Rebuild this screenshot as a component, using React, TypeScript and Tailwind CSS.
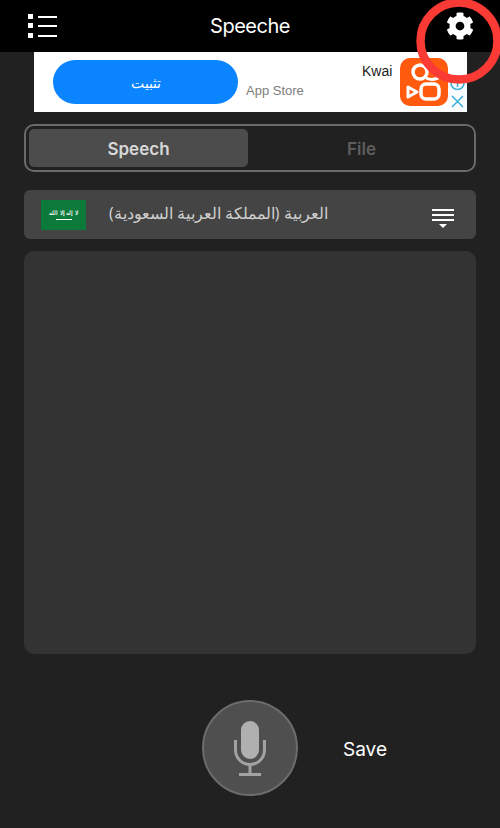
import { FaCog } from "react-icons/fa";

export default function App() {
  return (
    <div className="relative w-[500px] h-[828px] overflow-hidden bg-[#212121] font-['Liberation_Sans','Noto_Sans',sans-serif]">
      <header className="relative h-[52px] bg-black flex items-center justify-between pl-[28px] pr-[26px]">
        <svg width="30" height="25" viewBox="0 0 30 25" fill="#fff">
          <rect x="0" y="0" width="5" height="5" />
          <rect x="0" y="9" width="5" height="5" />
          <rect x="0" y="19" width="5" height="5" />
          <rect x="10" y="2" width="19" height="2" />
          <rect x="10" y="11" width="19" height="2" />
          <rect x="10" y="21" width="19" height="2" />
        </svg>
        <h1 className="absolute left-0 right-0 top-[13px] text-center text-[20px] leading-[26px] text-white font-['Inter',sans-serif] tracking-[-0.5px]">Speeche</h1>
        <FaCog size={28} color="#fff" />
      </header>

      <div className="relative mx-[34px] w-[433px] h-[60px] bg-white flex items-center">
        <div className="ml-[19px] w-[185px] h-[44px] rounded-full bg-[#0a84ff] flex items-center justify-center text-white text-[14px] font-['Noto_Sans',sans-serif]" dir="rtl">تثبيت</div>
        <span className="absolute left-[212px] top-[31px] text-[13px] leading-[16px] text-[#7d7d7d]">App Store</span>
        <span className="absolute left-[328px] top-[11px] text-[14px] leading-[16px] text-[#222]">Kwai</span>
        <div className="absolute left-[366px] top-[6px] w-[48px] h-[48px] rounded-[10px] bg-[#ff5a0d]">
          <svg width="48" height="48" viewBox="0 0 48 48" fill="none" stroke="#fff" strokeWidth="3.500">
            <circle cx="20" cy="14" r="7" />
            <path d="M25 19c3 3 8 3 13 1" strokeWidth="3" strokeLinecap="round" />
            <rect x="21" y="26" width="18" height="15" rx="5" />
            <path d="M8 29l9 5-9 5z" strokeWidth="3" strokeLinejoin="round" />
          </svg>
        </div>
        <div className="absolute right-0 top-[27px] w-[19px] h-[33px] bg-[#fafdff] flex flex-col items-center">
          <svg width="15" height="15" viewBox="0 0 15 15" fill="none" stroke="#3ab0d8" strokeWidth="1.500">
            <circle cx="7.500" cy="4" r="6.500" />
            <path d="M7.500 2v6" />
          </svg>
          <svg width="13" height="13" viewBox="0 0 13 13" fill="none" stroke="#3ab0d8" strokeWidth="1.500" className="mt-[1px]">
            <path d="M1 1l11 11M12 1L1 12" />
          </svg>
        </div>
      </div>

      <div className="mx-[24px] mt-[12px] w-[452px] h-[48px] rounded-[10px] border-2 border-[#6a6a6a] p-[3px] flex">
        <div className="w-[219px] pt-[4px] rounded-[5px] bg-[#4c4c4c] flex items-center justify-center text-[17px] font-semibold text-[#d8d8d8] font-['Inter',sans-serif]">Speech</div>
        <div className="flex-1 pt-[4px] pl-[4px] flex items-center justify-center text-[17px] font-semibold text-[#5e5e5e] font-['Inter',sans-serif]">File</div>
      </div>

      <div className="mx-[24px] mt-[18px] w-[452px] h-[49px] rounded-[6px] bg-[#444444] flex items-center pl-[17px] pr-[22px]">
        <div className="w-[45px] h-[30px] bg-[#0b7a3b] flex flex-col items-center justify-center gap-[2px]">
          <span className="text-[5.500px] leading-[8px] font-bold text-[#e4f0e8] font-['Noto_Sans',sans-serif] whitespace-nowrap" dir="rtl">لا إله إلا الله</span>
          <div className="w-[16px] h-px bg-white" />
        </div>
        <div className="ml-[23px] flex-1 text-[15.600px] leading-[24px] text-[#cfcfcf] font-['Noto_Sans',sans-serif] mb-[3px]">
          <span dir="rtl">العربية (المملكة العربية السعودية)</span>
        </div>
        <svg width="22" height="20" viewBox="0 0 22 20" fill="#fff" className="mt-[9px]">
          <rect x="0" y="0" width="22" height="2" />
          <rect x="0" y="5" width="22" height="2" />
          <rect x="0" y="10" width="22" height="2" />
          <path d="M7 15h8l-4 4z" />
        </svg>
      </div>

      <div className="mx-[24px] mt-[12px] w-[452px] h-[403px] rounded-[10px] bg-[#333333]" />

      <div className="relative mt-[46px] flex items-center">
        <div className="ml-[202px] w-[96px] h-[96px] rounded-full bg-[#4f4f4f] border-2 border-[#6c6c6c] flex items-center justify-center">
          <svg width="32" height="56" viewBox="0 0 32 56" fill="none" className="mt-[1px]">
            <rect x="7" y="0" width="18" height="38" rx="9" fill="#b0b0b0" />
            <path d="M1.500 19v10a14.500 14.500 0 0 0 29 0V19" stroke="#a2a2a2" strokeWidth="3" />
            <path d="M16 44v9" stroke="#a2a2a2" strokeWidth="3" />
            <path d="M5 53.500h22" stroke="#a2a2a2" strokeWidth="3" />
          </svg>
        </div>
        <span className="ml-[45px] mt-[4px] text-[19px] leading-[24px] text-white font-['Inter',sans-serif]">Save</span>
      </div>

      <svg width="100" height="100" viewBox="0 0 100 100" fill="none" className="absolute left-[409px] top-[-9px] pointer-events-none">
        <circle cx="50" cy="50" r="38.500" stroke="#f93a35" strokeWidth="8.500" />
      </svg>
    </div>
  );
}
